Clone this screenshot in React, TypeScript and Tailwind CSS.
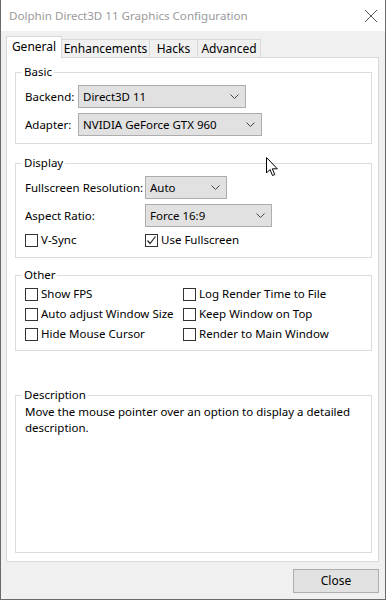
import { ReactNode } from 'react';

const Chevron = () => (
  <svg width="9" height="5" viewBox="0 0 9 5" className="shrink-0">
    <path d="M0.5 0.5 L4.5 4.5 L8.5 0.5" fill="none" stroke="#444" strokeWidth="1" />
  </svg>
);

const Combo = ({ value, width }: { value: string; width: string }) => (
  <div
    className={`${width} h-[23px] flex items-center justify-between pl-[4px] pr-[6px] bg-[#e1e1e1] border border-[#adadad] text-black`}
  >
    <span className="whitespace-nowrap">{value}</span>
    <Chevron />
  </div>
);

const Check = ({ label, checked = false }: { label: string; checked?: boolean }) => (
  <div className="flex items-center gap-[3px] h-[20px]">
    <div className="w-[13px] h-[13px] border border-[#333] bg-white flex items-center justify-center shrink-0">
      {checked && (
        <svg width="11" height="11" viewBox="0 0 11 11">
          <path d="M1.5 5.5 L4 8.5 L9.5 1.5" fill="none" stroke="#222" strokeWidth="1.2" />
        </svg>
      )}
    </div>
    <span className="whitespace-nowrap">{label}</span>
  </div>
);

const Group = ({ title, className, children }: { title: string; className?: string; children: ReactNode }) => (
  <fieldset className={`border border-[#dcdcdc] px-[9px] ${className ?? ''}`}>
    <legend className="-ml-[3px] px-[2px] leading-[16px] text-black">{title}</legend>
    {children}
  </fieldset>
);

const tabs = [
  { name: 'General', w: 'w-[56px]' },
  { name: 'Enhancements', w: 'w-[88px]' },
  { name: 'Hacks', w: 'w-[48px]' },
  { name: 'Advanced', w: 'w-[63px]' },
];

export default function App() {
  return (
    <div className="relative w-[386px] h-[600px] flex flex-col bg-[#f0f0f0] border-x border-b border-[#6a6a6a] font-['Noto_Sans',sans-serif] text-[11.5px] leading-[16px] text-black overflow-hidden">
      {/* title bar */}
      <div className="h-[31px] shrink-0 bg-white flex items-center justify-between pl-[8px] pr-[7px]">
        <span className="text-[#9a9a9a] text-[11.6px]">Dolphin Direct3D 11 Graphics Configuration</span>
        <svg width="14" height="14" viewBox="0 0 14 14">
          <path d="M1 1 L13 13 M13 1 L1 13" stroke="#555" strokeWidth="1" />
        </svg>
      </div>

      {/* tabs */}
      <div className="h-[26px] shrink-0 flex items-end ml-[5px]">
        {tabs.map((t, i) =>
          i === 0 ? (
            <div
              key={t.name}
              className={`${t.w} h-[22px] -mb-px relative z-10 bg-white border-x border-t border-[#d9d9d9] flex items-start justify-center pt-[2px] text-[12px]`}
            >
              {t.name}
            </div>
          ) : (
            <div
              key={t.name}
              className={`${t.w} h-[18px] bg-[#f0f0f0] border-r border-t border-[#d9d9d9] flex items-center justify-center text-[12px]`}
            >
              {t.name}
            </div>
          ),
        )}
      </div>

      {/* tab panel */}
      <div className="h-[505px] shrink-0 ml-[5px] mr-[6px] bg-white border border-[#d9d9d9] flex flex-col pt-[6px] pb-[8px] pl-[8px] pr-[6px]">
        <Group title="Basic" className="pt-[5px] pb-[7px]">
          <div className="flex flex-col gap-[5px]">
            <div className="flex items-center">
              <span className="w-[53px] whitespace-nowrap">Backend:</span>
              <Combo value="Direct3D 11" width="w-[168px]" />
            </div>
            <div className="flex items-center">
              <span className="w-[53px] whitespace-nowrap">Adapter:</span>
              <Combo value="NVIDIA GeForce GTX 960" width="w-[184px]" />
            </div>
          </div>
        </Group>

        <Group title="Display" className="mt-[11px] pt-[5px] pb-[7px]">
          <div className="flex flex-col gap-[5px]">
            <div className="flex items-center">
              <span className="w-[120px] whitespace-nowrap">Fullscreen Resolution:</span>
              <Combo value="Auto" width="w-[82px]" />
            </div>
            <div className="flex items-center">
              <span className="w-[120px] whitespace-nowrap">Aspect Ratio:</span>
              <Combo value="Force 16:9" width="w-[127px]" />
            </div>
            <div className="flex items-center -mt-[2px]">
              <div className="w-[120px]">
                <Check label="V-Sync" />
              </div>
              <Check label="Use Fullscreen" checked />
            </div>
          </div>
        </Group>

        <Group title="Other" className="mt-[9px] pt-[1px] pb-[6px]">
          <div className="grid grid-cols-[158px_1fr]">
            <Check label="Show FPS" />
            <Check label="Log Render Time to File" />
            <Check label="Auto adjust Window Size" />
            <Check label="Keep Window on Top" />
            <Check label="Hide Mouse Cursor" />
            <Check label="Render to Main Window" />
          </div>
        </Group>

        <Group title="Description" className="mt-[36px] flex-1 pt-[1px]">
          <p className="leading-[16px]">
            Move the mouse pointer over an option to display a detailed description.
          </p>
        </Group>
      </div>

      {/* footer */}
      <div className="flex-1 flex justify-end items-start pt-[7px] pr-[6px]">
        <button className="w-[86px] h-[24px] bg-[#e1e1e1] border border-[#adadad] text-black text-[12px]">Close</button>
      </div>

      {/* mouse pointer */}
      <svg className="absolute left-[265px] top-[157px]" width="13" height="20" viewBox="0 0 13 20">
        <path
          d="M0.5 0.5 L0.5 16 L4 12.5 L6.5 18.5 L8.8 17.5 L6.3 11.8 L11.3 11.8 Z"
          fill="#fff"
          stroke="#000"
          strokeWidth="1"
          strokeLinejoin="miter"
        />
      </svg>
    </div>
  );
}
